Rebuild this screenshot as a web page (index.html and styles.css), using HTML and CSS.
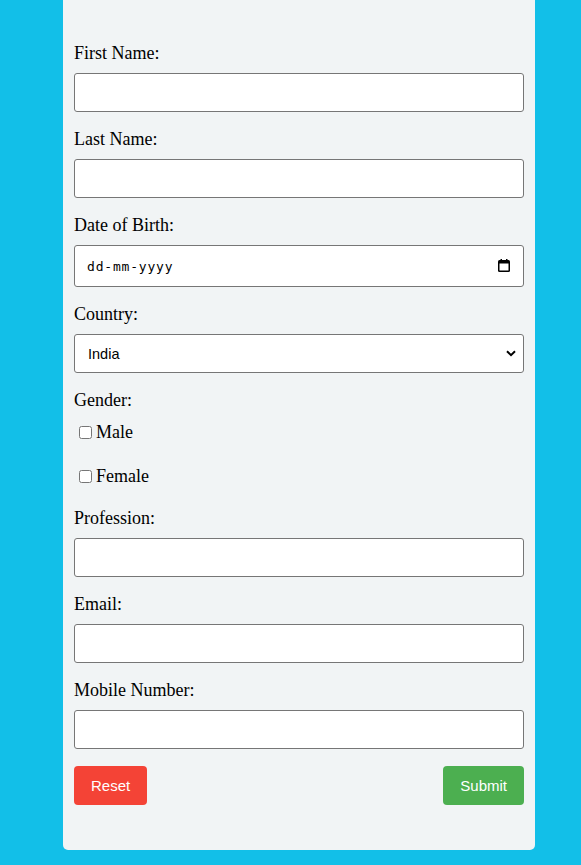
FILE: index.html
```html
<!DOCTYPE html>
<html lang="en">
<head>
<meta charset="utf-8">
<title>Registration Form</title>
<link rel="stylesheet" href="styles.css">
</head>
<body>
<div class="card">
  <form class="form">
    <label class="field-label" for="fname">First Name:</label>
    <input class="field" type="text" id="fname">

    <label class="field-label" for="lname">Last Name:</label>
    <input class="field" type="text" id="lname">

    <label class="field-label" for="dob">Date of Birth:</label>
    <div class="date-wrap">
      <input class="field field-date" type="text" id="dob" placeholder="dd-mm-yyyy">
      <svg class="cal-icon" width="12" height="13" viewBox="0 0 12 13" aria-hidden="true">
        <rect x="0" y="1" width="12" height="12" rx="1.5" fill="#000"/>
        <rect x="1.5" y="4.5" width="9" height="7" fill="#fff"/>
        <rect x="2.5" y="0" width="1.5" height="2" fill="#000"/>
        <rect x="8" y="0" width="1.5" height="2" fill="#000"/>
      </svg>
    </div>

    <label class="field-label" for="country">Country:</label>
    <select class="field field-select" id="country">
      <option>India</option>
      <option>USA</option>
      <option>UK</option>
    </select>

    <label class="field-label">Gender:</label>
    <label class="option"><input class="check" type="checkbox">Male</label>
    <label class="option"><input class="check" type="checkbox">Female</label>

    <label class="field-label" for="prof">Profession:</label>
    <input class="field" type="text" id="prof">

    <label class="field-label" for="email">Email:</label>
    <input class="field" type="email" id="email">

    <label class="field-label" for="mobile">Mobile Number:</label>
    <input class="field" type="tel" id="mobile">

    <div class="actions">
      <button class="btn btn-reset" type="reset">Reset</button>
      <button class="btn btn-submit" type="submit">Submit</button>
    </div>
  </form>
</div>
</body>
</html>
```

FILE: styles.css
```css
html, body {
  margin: 0;
  padding: 0;
}

body {
  background: #12bfe8;
  font-family: "Liberation Serif", "Times New Roman", serif;
  font-size: 18px;
  color: #000;
  padding-bottom: 15px;
}

.card {
  box-sizing: border-box;
  width: 472px;
  margin-left: 63px;
  background: #f1f4f5;
  border-radius: 0 0 5px 5px;
  padding: 43px 11px 45px;
}

.form {
  display: flex;
  flex-direction: column;
}

.field-label {
  display: block;
  margin-bottom: 9px;
  line-height: normal;
}

.field {
  box-sizing: border-box;
  width: 100%;
  height: 39px;
  margin: 0 0 17px;
  padding: 0 13px;
  border: 1px solid #767676;
  border-radius: 3px;
  background: #fff;
  font-family: "Liberation Sans", Arial, sans-serif;
  font-size: 14.5px;
  color: #000;
}

.date-wrap {
  position: relative;
}

.field-date {
  height: 42px;
  font-family: "DejaVu Sans Mono", "Liberation Mono", monospace;
  font-size: 13px;
  padding-left: 12px;
  padding-right: 30px;
  letter-spacing: 0.8px;
}

.field-date::placeholder {
  color: #000;
  opacity: 1;
}

.cal-icon {
  position: absolute;
  right: 14px;
  top: 14px;
  pointer-events: none;
}

.field-select {
  appearance: none;
  -webkit-appearance: none;
  padding-left: 13px;
  background-image: url("data:image/svg+xml,%3Csvg xmlns='http://www.w3.org/2000/svg' width='10' height='7' viewBox='0 0 10 7'%3E%3Cpath d='M1 1.2 L5 5.2 L9 1.2' fill='none' stroke='%23000' stroke-width='2'/%3E%3C/svg%3E");
  background-repeat: no-repeat;
  background-position: right 7px center;
  background-size: 10px 7px;
}

.option {
  display: flex;
  align-items: center;
  margin: 2px 0 21px;
  line-height: normal;
}

.option:last-of-type {
  margin-bottom: 20px;
}

.check {
  width: 13px;
  height: 13px;
  margin: 0 4px 0 5px;
}

.actions {
  display: flex;
  justify-content: space-between;
}

.btn {
  height: 39px;
  padding: 0 17px;
  border: none;
  border-radius: 4px;
  color: #fff;
  font-family: "Liberation Sans", Arial, sans-serif;
  font-size: 15px;
  cursor: pointer;
}

.btn-reset {
  background: #f44336;
}

.btn-submit {
  background: #4caf50;
}
```
